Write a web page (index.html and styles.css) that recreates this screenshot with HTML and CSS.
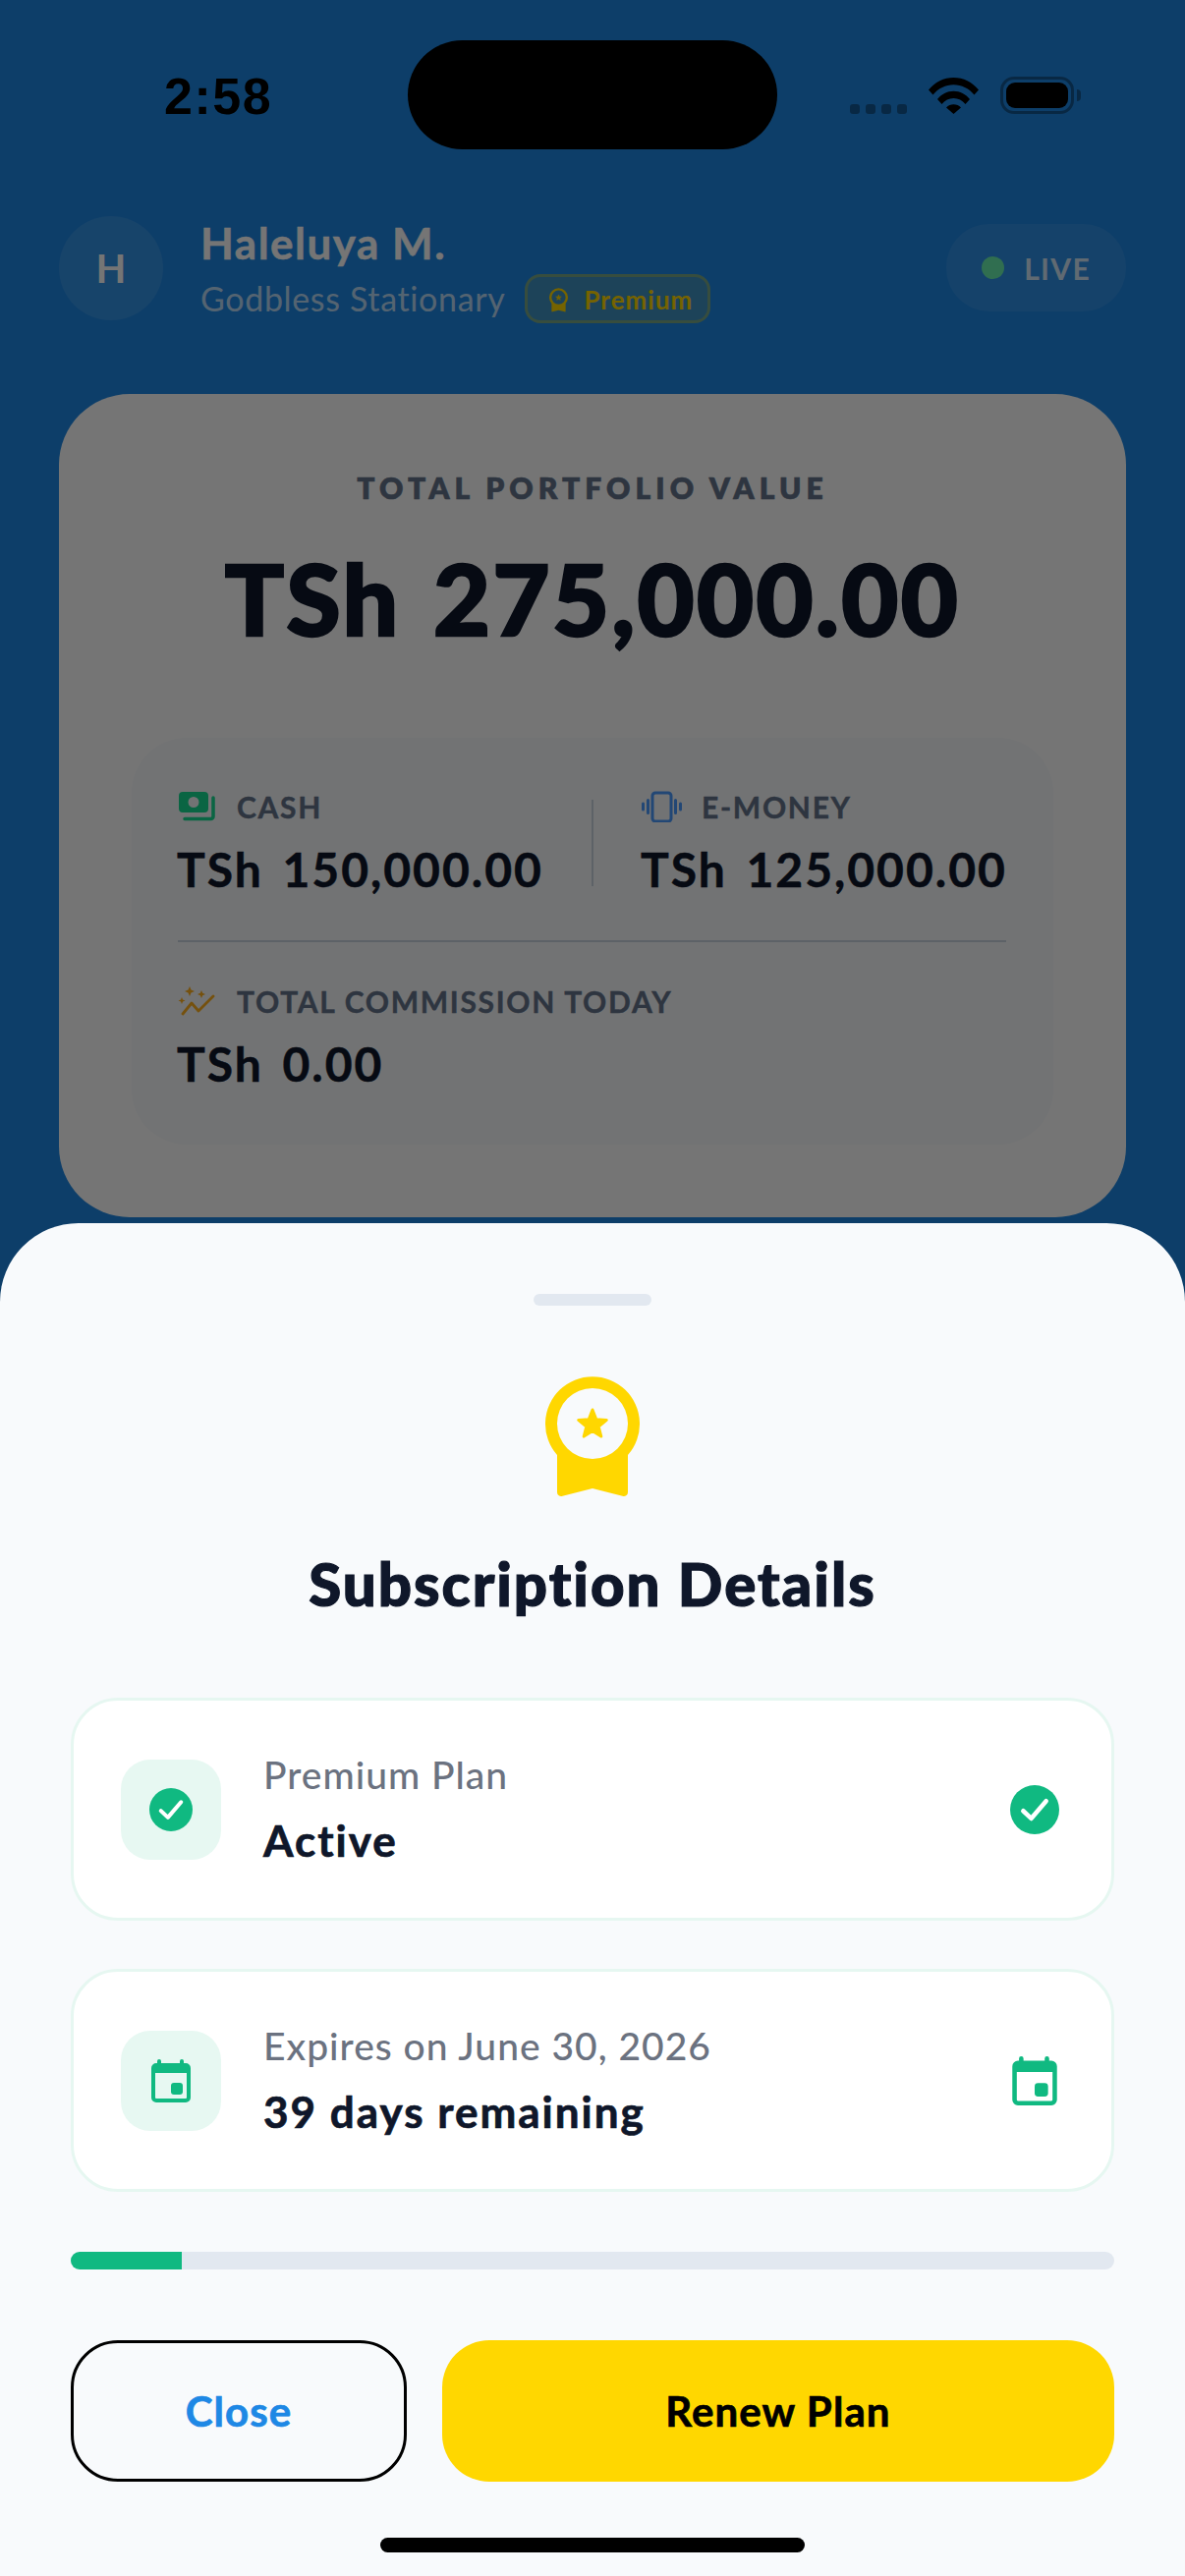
FILE: index.html
```html
<!DOCTYPE html>
<html lang="en">
<head>
    <meta charset="UTF-8">
    <meta name="viewport" content="width=device-width, initial-scale=1.0">
    <title>Subscription Details</title>
    <link rel="stylesheet" href="styles.css">
</head>
<body>

<svg class="defs" width="0" height="0">
    <symbol id="medal" viewBox="0 0 96 124">
        <path fill="currentColor" fill-rule="evenodd" d="M12 80A48 48 0 1 1 84 80V118a4 4 0 0 1-5.5 3.7L48 114 17.5 121.7A4 4 0 0 1 12 118Z M48 12a36 36 0 1 0 0 72a36 36 0 1 0 0-72Z"/>
        <polygon fill="currentColor" stroke="currentColor" stroke-width="3" stroke-linejoin="round" points="48,34 51.8,43.7 62.3,44.4 54.2,51 56.8,61.1 48,55.5 39.2,61.1 41.8,51 33.7,44.4 44.2,43.7"/>
    </symbol>
    <symbol id="check" viewBox="0 0 24 24">
        <circle cx="12" cy="12" r="12" fill="#10B981"/>
        <polyline points="6.4,12.6 10.3,16.3 17.6,7.8" fill="none" stroke="#fff" stroke-width="2.2" stroke-linecap="round" stroke-linejoin="round"/>
    </symbol>
    <symbol id="calendar" viewBox="0 0 40 44">
        <path fill="#10B981" fill-rule="evenodd" d="M6 4V2a2 2 0 0 1 4 0v2h19V2a2 2 0 0 1 4 0v2h2a5 5 0 0 1 5 5v30a5 5 0 0 1-5 5H5a5 5 0 0 1-5-5V9a5 5 0 0 1 5-5z M4 14v25a1 1 0 0 0 1 1h30a1 1 0 0 0 1-1V14z"/>
        <rect x="20" y="24" width="12" height="12" rx="3" fill="#10B981"/>
    </symbol>
</svg>

<div id="screen">
    <div class="status-bar">
        <span class="clock">2:58</span>
        <div class="status-icons">
            <div class="signal"><i></i><i></i><i></i><i></i></div>
            <svg width="51" height="37" viewBox="0 0 51 37">
                <path d="M0 12.500C6.500 4.500 15.500 0 25.500 0S44.500 4.500 51 12.500L46.500 17.500C41 11 33.500 7.300 25.500 7.300S10 11 4.500 17.500Z"/>
                <path d="M9 22C13 17 19 13.800 25.500 13.800S38 17 42 22L37.500 27C34.500 23.200 30.200 21 25.500 21S16.500 23.200 13.500 27Z"/>
                <path d="M18 30.500C20 28.500 22.700 27.300 25.500 27.300S31 28.500 33 30.500L25.500 37Z"/>
            </svg>
            <div class="battery"><div class="battery-body"><div class="battery-fill"></div></div><div class="battery-tip"></div></div>
        </div>
    </div>
    <div class="island"></div>

    <div class="header">
        <div class="avatar">H</div>
        <div class="user-info">
            <div class="user-name">Haleluya M.</div>
            <div class="user-sub">
                <span>Godbless Stationary</span>
                <span class="badge">
                    <svg width="19" height="25"><use href="#medal"/></svg>
                    Premium
                </span>
            </div>
        </div>
        <div class="live-pill"><span class="live-dot"></span>LIVE</div>
    </div>

    <div class="portfolio-card">
        <div class="portfolio-label">TOTAL PORTFOLIO VALUE</div>
        <div class="portfolio-value">TSh 275,000.00</div>

        <div class="balances">
            <div class="balance-row">
                <div class="balance">
                    <div class="balance-label">
                        <svg class="ic-cash" width="40" height="32" viewBox="0 0 40 32">
                            <path fill="currentColor" fill-rule="evenodd" d="M5 1h22a4 4 0 0 1 4 4v13a4 4 0 0 1-4 4H5a4 4 0 0 1-4-4V5a4 4 0 0 1 4-4z M16 6a5.500 5.500 0 1 0 0 11a5.500 5.500 0 1 0 0-11z"/>
                            <path fill="none" stroke="currentColor" stroke-width="3.500" stroke-linecap="round" stroke-linejoin="round" d="M36 7V26a2.500 2.500 0 0 1-2.500 2.500H7"/>
                        </svg>
                        CASH
                    </div>
                    <div class="balance-value">TSh 150,000.00</div>
                </div>
                <div class="vline"></div>
                <div class="balance balance-right">
                    <div class="balance-label">
                        <svg class="ic-phone" width="41" height="32" viewBox="0 0 41 32">
                            <rect x="11" y="2" width="19" height="29" rx="3" fill="none" stroke="currentColor" stroke-width="3"/>
                            <path fill="none" stroke="currentColor" stroke-width="3" stroke-linecap="round" d="M6.500 9.500v13M34.500 9.500v13M1.500 13v6M39.500 13v6"/>
                        </svg>
                        E-MONEY
                    </div>
                    <div class="balance-value">TSh 125,000.00</div>
                </div>
            </div>
            <div class="hline"></div>
            <div class="balance">
                <div class="balance-label">
                    <svg class="ic-spark" width="40" height="30" viewBox="0 0 40 30">
                        <polyline points="5,28 14,17 21,25 36,10" fill="none" stroke="currentColor" stroke-width="2.800" stroke-linecap="round" stroke-linejoin="round"/>
                        <path fill="currentColor" d="M12 0l1.500 3.500L17 5l-3.500 1.500L12 10l-1.500-3.500L7 5l3.500-1.500z"/>
                        <path fill="currentColor" d="M24 4l1.200 2.800L28 8l-2.800 1.200L24 12l-1.200-2.800L20 8l2.800-1.200z"/>
                        <path fill="currentColor" d="M4 11l1 2.500L7.500 14.500 5 15.500 4 18l-1-2.500L.5 14.500 3 13.500z"/>
                    </svg>
                    TOTAL COMMISSION TODAY
                </div>
                <div class="balance-value">TSh 0.00</div>
            </div>
        </div>
    </div>

    <div class="scrim"></div>

    <div class="sheet">
        <div class="sheet-handle"></div>
        <svg class="sheet-medal" width="96" height="124"><use href="#medal"/></svg>
        <h2 class="sheet-title">Subscription Details</h2>

        <div class="detail-row">
            <div class="detail-tile"><svg width="44" height="44"><use href="#check"/></svg></div>
            <div class="detail-text">
                <div class="detail-label">Premium Plan</div>
                <div class="detail-value">Active</div>
            </div>
            <svg class="detail-end" width="50" height="50"><use href="#check"/></svg>
        </div>

        <div class="detail-row row-second">
            <div class="detail-tile"><svg width="40" height="44"><use href="#calendar"/></svg></div>
            <div class="detail-text">
                <div class="detail-label">Expires on June 30, 2026</div>
                <div class="detail-value">39 days remaining</div>
            </div>
            <svg class="detail-end" width="50" height="50"><use href="#calendar"/></svg>
        </div>

        <div class="progress"><div class="progress-fill" style="width: 10.6%"></div></div>

        <div class="actions">
            <button class="btn-close">Close</button>
            <button class="btn-renew">Renew Plan</button>
        </div>

        <div class="home-bar"></div>
    </div>
</div>

</body>
</html>
```

FILE: styles.css
```css
* {
    box-sizing: border-box;
}
body {
    margin: 0;
    font-family: Lato, "Noto Sans", sans-serif;
}
.defs {
    position: absolute;
}
#screen {
    position: relative;
    width: 1206px;
    height: 2622px;
    overflow: hidden;
    background-color: #1E88E5;
}

/* status bar */
.status-bar {
    display: flex;
    justify-content: space-between;
    align-items: flex-start;
    height: 216px;
    padding: 78px 106px 0 167px;
}
.clock {
    font-family: "Liberation Sans", sans-serif;
    font-size: 52px;
    font-weight: 700;
    line-height: 40px;
    letter-spacing: 1.5px;
    color: #000;
}
.status-icons {
    display: flex;
    align-items: flex-end;
    gap: 22px;
}
.signal {
    display: flex;
    gap: 6px;
}
.signal i {
    width: 10px;
    height: 10px;
    border-radius: 3px;
    background: rgba(0, 0, 0, 0.35);
}
.battery {
    display: flex;
    align-items: center;
    gap: 3px;
}
.battery-body {
    width: 75px;
    height: 38px;
    padding: 3px;
    border: 3px solid rgba(0, 0, 0, 0.35);
    border-radius: 14px;
}
.battery-fill {
    height: 100%;
    background: #000;
    border-radius: 9px;
}
.battery-tip {
    width: 4px;
    height: 12px;
    background: rgba(0, 0, 0, 0.35);
    border-radius: 0 4px 4px 0;
}
.island {
    position: absolute;
    left: 415px;
    top: 41px;
    width: 376px;
    height: 111px;
    background: #000;
    border-radius: 56px;
}

/* header */
.header {
    display: flex;
    align-items: center;
    padding: 0 60px;
}
.avatar {
    display: flex;
    align-items: center;
    justify-content: center;
    width: 106px;
    height: 106px;
    border-radius: 50%;
    background: rgba(255, 255, 255, 0.1);
    color: #fff;
    font-size: 40px;
    font-weight: 700;
}
.user-info {
    flex: 1;
    margin-left: 38px;
    padding-top: 6px;
}
.user-name {
    font-size: 44px;
    font-weight: 700;
    line-height: 50px;
    letter-spacing: 1.500px;
    color: #fff;
    -webkit-text-stroke: 0.5px #fff;
}
.user-sub {
    display: flex;
    align-items: center;
    gap: 20px;
    margin-top: 7px;
    font-size: 34px;
    line-height: 50px;
    letter-spacing: 0.65px;
    color: rgba(255, 255, 255, 0.7);
}
.badge {
    display: flex;
    align-items: center;
    gap: 16px;
    height: 50px;
    padding: 2px 15px 0 22px;
    border: 3px solid rgba(255, 215, 0, 0.3);
    border-radius: 16px;
    background: rgba(255, 215, 0, 0.15);
    color: #FFD700;
    font-size: 26px;
    font-weight: 700;
    letter-spacing: 1px;
}
.live-pill {
    display: flex;
    align-items: center;
    gap: 20px;
    height: 89px;
    padding: 0 36px;
    border-radius: 44px;
    background: rgba(255, 255, 255, 0.08);
    color: rgba(255, 255, 255, 0.8);
    font-size: 30px;
    font-weight: 700;
    letter-spacing: 1.3px;
}
.live-dot {
    width: 23px;
    height: 23px;
    border-radius: 50%;
    background: #69F0AE;
}

/* portfolio card */
.portfolio-card {
    margin: 72px 60px 0;
    height: 838px;
    padding: 77px 74px 74px;
    border-radius: 72px;
    background: #fff;
}
.portfolio-label {
    text-align: center;
    font-size: 30px;
    font-weight: 800;
    line-height: 36px;
    letter-spacing: 5px;
    color: #64748B;
    -webkit-text-stroke: 0.5px #64748B;
}
.portfolio-value {
    margin-top: 34px;
    text-align: center;
    font-size: 100px;
    font-weight: 900;
    line-height: 120px;
    letter-spacing: 2.500px;
    word-spacing: 7px;
    color: #0F172A;
    -webkit-text-stroke: 2.5px #0F172A;
}
.balances {
    margin-top: 83px;
    padding: 52px 48px 54px 47px;
    border-radius: 56px;
    background: #F8FAFC;
}
.balance-row {
    display: grid;
    grid-template-columns: 421px 2px 1fr;
    align-items: center;
}
.balance-right {
    padding-left: 49px;
}
.balance-label {
    display: flex;
    align-items: center;
    gap: 20px;
    font-size: 30px;
    font-weight: 700;
    line-height: 36px;
    letter-spacing: 1.700px;
    color: #64748B;
    -webkit-text-stroke: 0.4px #64748B;
}
.balance-value {
    margin: 18px 0 0 -1px;
    font-size: 48px;
    font-weight: 700;
    line-height: 56px;
    letter-spacing: 2px;
    word-spacing: 6px;
    white-space: nowrap;
    color: #0F172A;
    -webkit-text-stroke: 0.5px #0F172A;
}
.ic-cash {
    color: #16DC92;
}
.ic-phone {
    color: #4A9CFF;
}
.ic-spark {
    color: #FFB020;
}
.vline {
    height: 88px;
    background: #CBD5E1;
}
.hline {
    height: 2px;
    margin: 44px 0 42px;
    background: #CBD5E1;
}

/* dim layer */
.scrim {
    position: absolute;
    inset: 0;
    background: rgba(0, 0, 0, 0.54);
}

/* bottom sheet */
.sheet {
    position: absolute;
    left: 0;
    right: 0;
    top: 1245px;
    bottom: 0;
    display: flex;
    flex-direction: column;
    padding: 72px 72px 0;
    border-radius: 80px 80px 0 0;
    background: #F8FAFC;
}
.sheet-handle {
    align-self: center;
    flex: none;
    width: 120px;
    height: 12px;
    border-radius: 6px;
    background: #E2E8F0;
}
.sheet-medal {
    align-self: center;
    flex: none;
    margin-top: 72px;
    color: #FFD700;
}
.sheet-title {
    margin: 51px 0 0;
    text-align: center;
    font-size: 60px;
    font-weight: 900;
    line-height: 72px;
    letter-spacing: 2px;
    color: #0F172A;
    -webkit-text-stroke: 1.2px #0F172A;
}
.detail-row {
    display: flex;
    align-items: center;
    flex: none;
    height: 227px;
    margin-top: 80px;
    padding: 0 53px 0 48px;
    border: 3px solid #E6F7F1;
    border-radius: 48px;
    background: #fff;
}
.row-second {
    margin-top: 49px;
}
.detail-tile {
    display: flex;
    align-items: center;
    justify-content: center;
    flex: none;
    width: 102px;
    height: 102px;
    border-radius: 30px;
    background: #E7F8F2;
}
.detail-text {
    flex: 1;
    margin-left: 43px;
}
.detail-label {
    font-size: 39px;
    font-weight: 500;
    line-height: 44px;
    letter-spacing: 1px;
    color: #6B7280;
}
.detail-value {
    margin-top: 19px;
    font-size: 44px;
    font-weight: 700;
    line-height: 52px;
    letter-spacing: 2px;
    color: #0F172A;
    -webkit-text-stroke: 0.7px #0F172A;
}
.detail-end {
    flex: none;
}
.progress {
    flex: none;
    height: 18px;
    margin-top: 61px;
    border-radius: 9px;
    background: #E2E8F0;
    overflow: hidden;
}
.progress-fill {
    height: 100%;
    background: #10B981;
}
.actions {
    display: flex;
    flex: none;
    gap: 36px;
    height: 144px;
    margin-top: 72px;
}
.actions button {
    font-family: Lato, "Noto Sans", sans-serif;
    font-size: 42px;
    font-weight: 700;
    letter-spacing: 1.100px;
    border-radius: 48px;
    cursor: pointer;
    -webkit-text-stroke: 0.7px currentColor;
}
.btn-close {
    width: 342px;
    border: 3px solid #000;
    background: transparent;
    color: #1E88E5;
}
.btn-renew {
    flex: 1;
    border: none;
    background: #FFD700;
    color: #000;
}
.home-bar {
    align-self: center;
    flex: none;
    width: 432px;
    height: 15px;
    margin-top: 57px;
    border-radius: 8px;
    background: #000;
}
```
